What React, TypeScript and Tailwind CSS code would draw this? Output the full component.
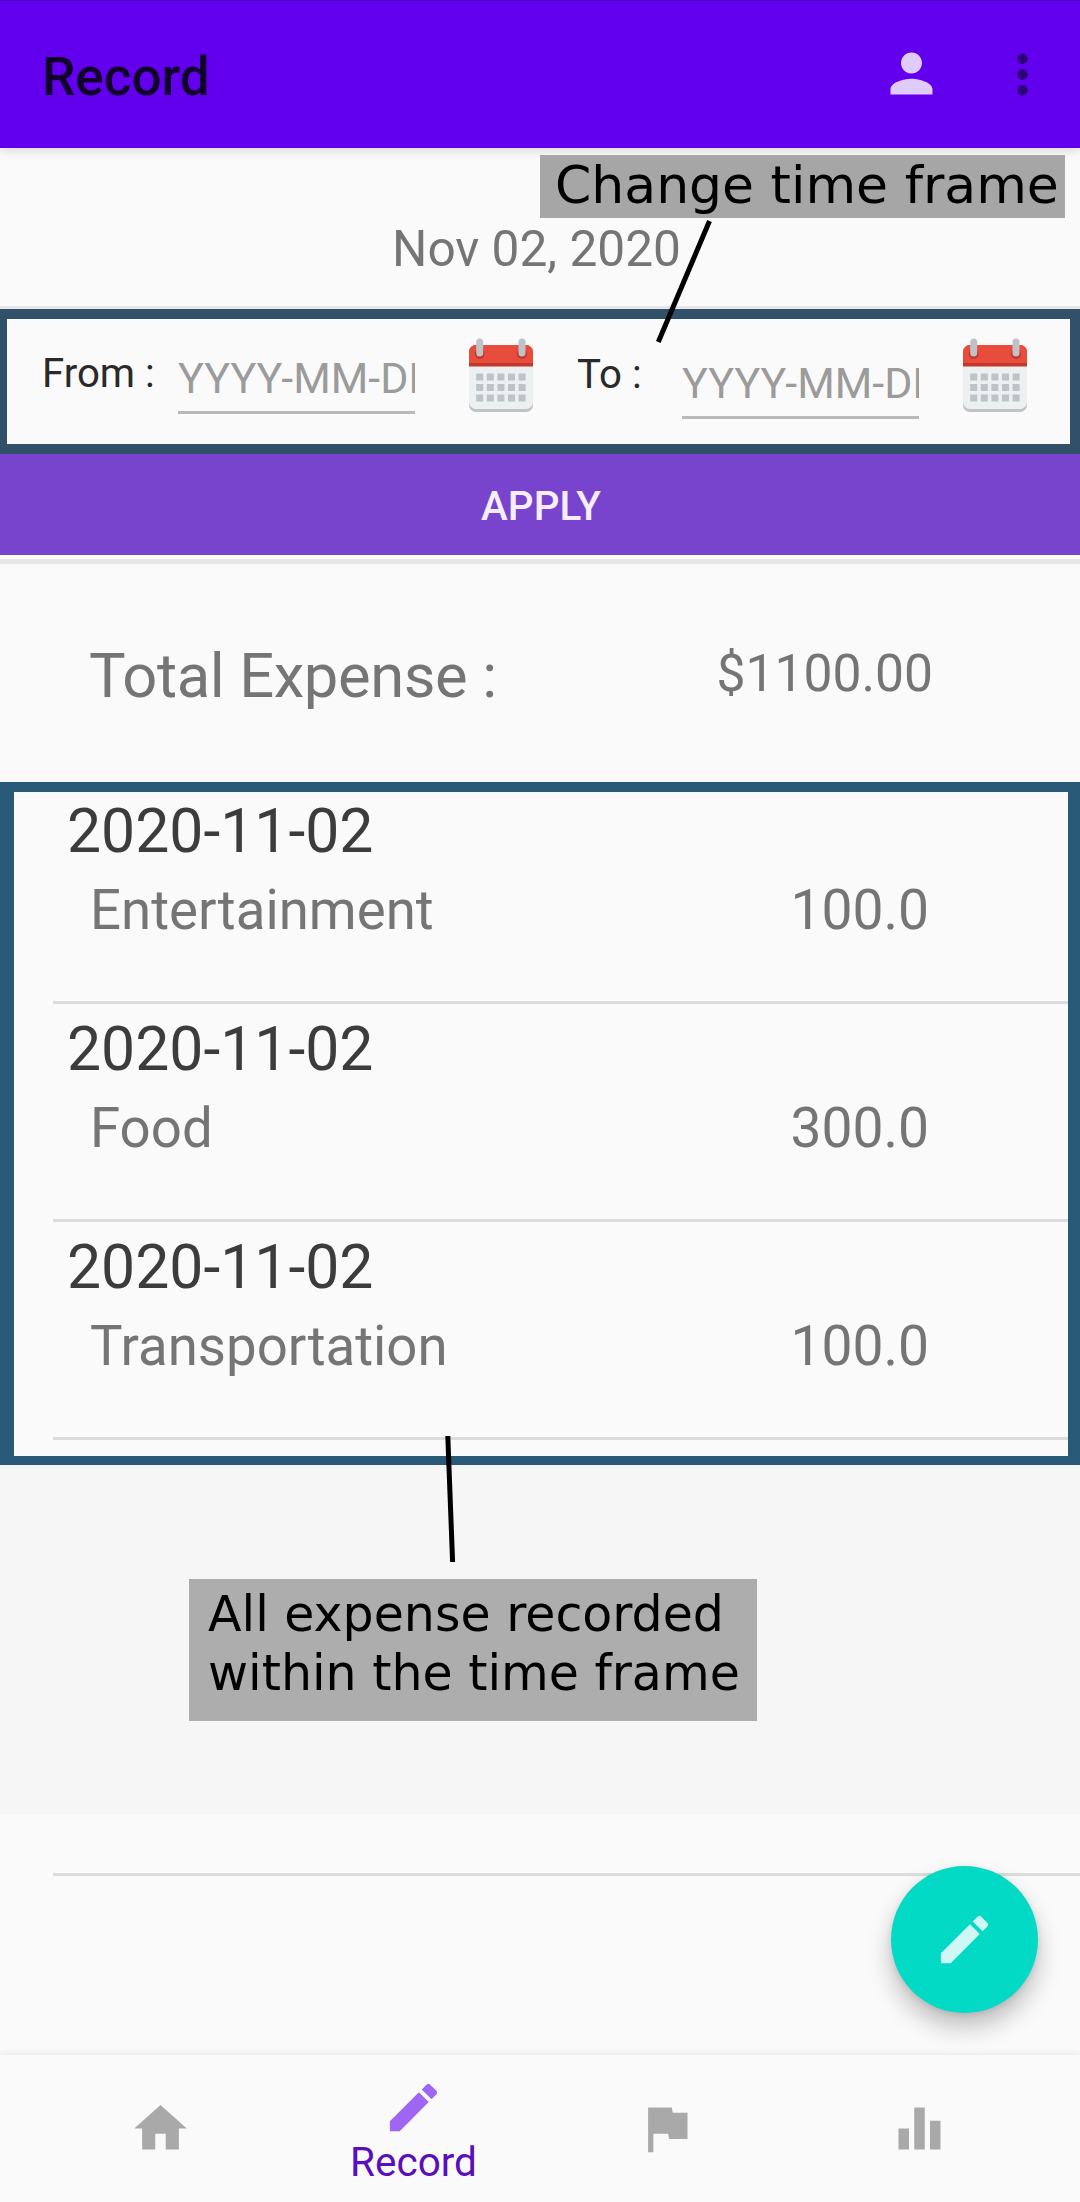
import React from "react";

const PENCIL =
  "M3 17.25V21h3.75L17.81 9.94l-3.75-3.75L3 17.25zM20.71 7.04c.39-.39.39-1.02 0-1.41l-2.34-2.34c-.39-.39-1.02-.39-1.41 0l-1.83 1.83 3.75 3.75 1.83-1.83z";

function Icon({ d, className }: { d: string; className: string }) {
  return (
    <svg viewBox="0 0 24 24" fill="currentColor" className={`h-[63px] w-[63px] shrink-0 ${className}`}>
      <path d={d} />
    </svg>
  );
}

function Calendar({ className }: { className: string }) {
  return (
    <svg viewBox="0 0 64 74" className={`h-[74px] w-[64px] shrink-0 ${className}`}>
      <rect x="0" y="20" width="64" height="54" rx="7" fill="#bdc3c7" />
      <path d="M0 20h64v44a7 7 0 0 1-7 7H7a7 7 0 0 1-7-7z" fill="#ecf0f1" />
      <path d="M0 28.5V14a7 7 0 0 1 7-7h50a7 7 0 0 1 7 7v14.5z" fill="#c0392b" />
      <path d="M0 25V14a7 7 0 0 1 7-7h50a7 7 0 0 1 7 7v11z" fill="#e74c3c" />
      <circle cx="10.7" cy="16" r="5" fill="#c0392b" />
      <circle cx="53" cy="16" r="5" fill="#c0392b" />
      <rect x="7.2" y="0.5" width="7" height="18" rx="3.5" fill="#bdc3c7" />
      <rect x="49.5" y="0.5" width="7" height="18" rx="3.5" fill="#bdc3c7" />
      {[0, 1, 2].map((r) =>
        [0, 1, 2, 3, 4].map((c) => (
          <rect key={`${r}-${c}`} x={7.2 + c * 10.6} y={35.5 + r * 10.5} width="7" height="7" fill="#bdc3c7" />
        )),
      )}
    </svg>
  );
}

function DateField({ className }: { className: string }) {
  return (
    <div className={`h-[62px] w-[237px] shrink-0 overflow-hidden whitespace-nowrap border-b-[3px] border-[#b9b9b9] text-[43px] leading-[52px] text-[#9b9b9b] ${className}`}>
      YYYY-MM-DD
    </div>
  );
}

const records = [
  { date: "2020-11-02", name: "Entertainment", amount: "100.0" },
  { date: "2020-11-02", name: "Food", amount: "300.0" },
  { date: "2020-11-02", name: "Transportation", amount: "100.0" },
];

export default function App() {
  return (
    <div className="relative flex h-[2202px] w-[1080px] flex-col overflow-hidden bg-[#fafafa] font-['Roboto',sans-serif]">
      <header className="z-10 flex h-[148px] shrink-0 border-t border-[#4a00c8] bg-[#6200ee] shadow-[0_3px_10px_rgba(0,0,0,0.12)]">
        <h1 className="mt-[46px] ml-[42px] flex-1 text-[53px] leading-[60px] font-medium text-[#12002c]">Record</h1>
        <Icon className="mt-[41px] text-[#e0ccfc]" d="M12 12c2.21 0 4-1.79 4-4s-1.79-4-4-4-4 1.79-4 4 1.79 4 4 4zm0 2c-2.67 0-8 1.34-8 4v2h16v-2c0-2.66-5.33-4-8-4z" />
        <Icon className="mt-[42px] mr-[26px] ml-[48px] text-[#2f0077]" d="M12 8c1.1 0 2-.9 2-2s-.9-2-2-2-2 .9-2 2 .9 2 2 2zm0 2c-1.1 0-2 .9-2 2s.9 2 2 2 2-.9 2-2-.9-2-2-2zm0 6c-1.1 0-2 .9-2 2s.9 2 2 2 2-.9 2-2-.9-2-2-2z" />
      </header>

      <div className="flex h-[161px] shrink-0 border-b-[3px] border-[#e6e6e6] pt-[71px] pl-[392px]">
        <p className="text-[49.6px] leading-[60px] text-[#757575]">Nov 02, 2020</p>
      </div>

      <section className="flex h-[145px] shrink-0 border-y-[10px] border-r-[10px] border-l-[7px] border-[#31516b] text-[40.2px] leading-[60px] text-[#292929]">
        <label className="mt-[25px] ml-[35px] w-[136px] shrink-0">From :</label>
        <DateField className="mt-[33px]" />
        <Calendar className="mt-[19px] ml-[54px]" />
        <label className="mt-[26px] ml-[44px] w-[105px] shrink-0">To :</label>
        <DateField className="mt-[38px]" />
        <Calendar className="mt-[19px] ml-[44px]" />
      </section>

      <button className="h-[101px] shrink-0 border-b border-[#7048ae] bg-[#7844cd] pt-[4px] pl-[2px] text-[40.4px] leading-[97px] font-medium text-[#f6edfd]">
        APPLY
      </button>

      <section className="mt-[4px] flex h-[223px] shrink-0 justify-between border-t-[5px] border-[#e6e6e6] pr-[147px] pl-[89px] text-[#757575]">
        <p className="mt-[82px] text-[61.5px] leading-[60px] tracking-[-0.4px]">Total Expense :</p>
        <p className="mt-[80px] text-[51.6px] leading-[60px]">$1100.00</p>
      </section>

      <section className="h-[683px] shrink-0 border-t-[10px] border-r-[12px] border-b-[9px] border-l-[14px] border-[#285a77]">
        {records.map((r, i) => (
          <div key={i} className={`ml-[39px] border-b-[3px] border-[#dcdcdc] ${i === 0 ? "h-[212px]" : "h-[218px] pt-[6px]"}`}>
            <div className="pt-[10px] pl-[14px] text-[60.7px] leading-[60px] text-[#3c3c3c]">{r.date}</div>
            <div className="mt-[18px] flex justify-between pr-[139px] pl-[37px] text-[#757575]">
              <span className="text-[54.6px] leading-[60px]">{r.name}</span>
              <span className="text-[55.2px] leading-[60px]">{r.amount}</span>
            </div>
          </div>
        ))}
      </section>

      <section className="h-[350px] shrink-0 bg-[#f6f6f6] pt-[114px] pl-[189px]">
        <div className="h-[142px] w-[568px] bg-[#adadad] pt-[6px] pl-[19px] font-['DejaVu_Sans',sans-serif] text-[49px] leading-[59px] whitespace-nowrap text-black">
          All expense recorded
          <br />
          within the time frame
        </div>
      </section>

      <div className="ml-[53px] h-[61px] shrink-0 border-b-[3px] border-[#dcdcdc]" />

      <nav className="mt-auto flex h-[147px] shrink-0 px-[34px] text-[#a9a9a9] shadow-[0_-1px_7px_rgba(0,0,0,0.09)]">
        <div className="flex w-[253px] justify-center pt-[42px]">
          <Icon className="" d="M10 20v-6h4v6h5v-8h3L12 3 2 12h3v8z" />
        </div>
        <div className="flex w-[253px] flex-col items-center pt-[21px]">
          <Icon className="text-[#9f66f3]" d={PENCIL} />
          <span className="-mt-[7px] text-[40.5px] leading-[60px] text-[#5a0fbd]">Record</span>
        </div>
        <div className="flex w-[253px] justify-center pt-[42px]">
          <Icon className="" d="M14.4 6L14 4H5v17h2v-7h5.6l.4 2h7V6z" />
        </div>
        <div className="flex w-[253px] justify-center pt-[42px]">
          <Icon className="" d="M10 20h4V4h-4v16zm-6 0h4v-8H4v8zM16 9v11h4V9h-4z" />
        </div>
      </nav>

      <button className="absolute top-[1866px] left-[891px] flex h-[147px] w-[147px] items-center justify-center rounded-full bg-[#03dac5] shadow-[0_14px_24px_rgba(0,0,0,0.24),0_2px_6px_rgba(0,0,0,0.1)]">
        <Icon className="text-[#cdf8f3]" d={PENCIL} />
      </button>

      <div className="absolute top-[155px] left-[540px] z-20 h-[63px] w-[525px] bg-[#a6a6a6] pl-[15px] font-['DejaVu_Sans',sans-serif] text-[52px] leading-[60px] whitespace-nowrap text-black">
        Change time frame
      </div>
      <svg className="absolute top-[215px] left-[650px] h-[135px] w-[70px]" stroke="#000" strokeWidth="5">
        <line x1="59.5" y1="6" x2="8.3" y2="127" />
      </svg>
      <svg className="absolute top-[1430px] left-[440px] h-[140px] w-[20px]" stroke="#000" strokeWidth="5">
        <line x1="7.8" y1="6" x2="12.6" y2="132" />
      </svg>
    </div>
  );
}
